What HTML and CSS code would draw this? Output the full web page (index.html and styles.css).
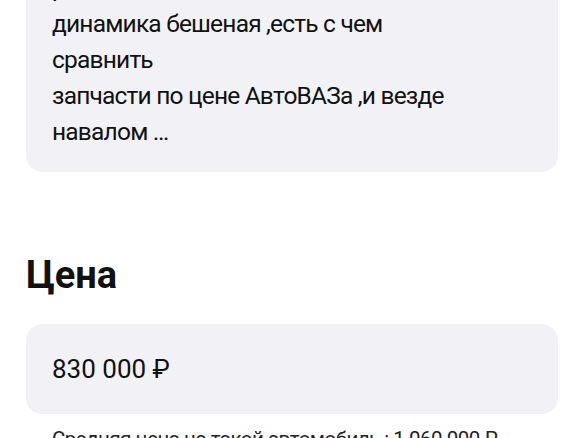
FILE: index.html
```html
<!DOCTYPE html>
<html lang="ru">
<head>
<meta charset="utf-8">
<link rel="stylesheet" href="styles.css">
</head>
<body>
<div class="page">
  <div class="card review">
    <p>расход небольшой<br>динамика бешеная ,есть с чем сравнить<br>запчасти по цене АвтоВАЗа ,и везде навалом …</p>
  </div>
  <h2 class="title">Цена</h2>
  <div class="card price">830 000 ₽</div>
  <p class="avg">Средняя цена на такой автомобиль : 1 060 000 ₽</p>
</div>
</body>
</html>
```
FILE: styles.css
```css
html, body {
  margin: 0;
  padding: 0;
  background: #ffffff;
}
.page {
  font-family: Roboto, "Noto Sans", sans-serif;
  color: #111111;
  padding: 0 26px;
  overflow: hidden;
  height: 438px;
}
.card {
  background: #f2f2f6;
  border-radius: 16px;
  padding: 22px 26px;
}
.review {
  margin-top: -52px;
}
.review p {
  margin: 0;
  font-size: 24.5px;
  letter-spacing: -0.8px;
  line-height: 36px;
  width: 410px;
}
.title {
  margin: 81px 0 0;
  font-size: 38px;
  font-weight: 700;
  line-height: 44px;
}
.price {
  margin-top: 27px;
  font-size: 26px;
  line-height: 30px;
  padding: 30px 26px;
}
.avg {
  margin: 11px 26px 0;
  font-size: 20.5px;
  letter-spacing: -0.5px;
  line-height: 28px;
  color: #222222;
}
```
